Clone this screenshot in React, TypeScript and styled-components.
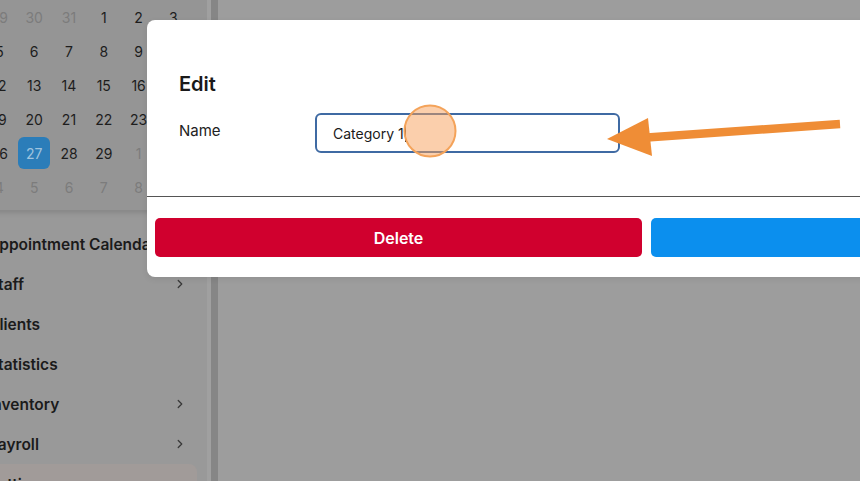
import React from "react";
import styled, { createGlobalStyle } from "styled-components";
import { ChevronRight } from "lucide-react";

const Global = createGlobalStyle`
  html, body { margin: 0; padding: 0; overflow: hidden; }
  body { font-family: Inter, "Noto Sans", sans-serif; }
  * { box-sizing: border-box; }
`;

const Page = styled.div`
  position: relative;
  width: 860px;
  height: 481px;
  overflow: hidden;
  display: flex;
  background: #9c9c9c;
`;

const Sidebar = styled.aside`
  flex: 0 0 247px;
  margin-left: -40px;
  background: #999999;
  display: flex;
  flex-direction: column;
  overflow: hidden;
  & > * { flex-shrink: 0; }
`;

const CalendarPanel = styled.div`
  background: #959595;
  padding: 0 0 6px 22px;
  box-shadow: 0 3px 5px rgba(0, 0, 0, 0.12);
`;

const CalendarViewport = styled.div`
  width: 215px;
  overflow: hidden;
`;

const CalendarGrid = styled.div`
  display: grid;
  grid-template-columns: repeat(7, 34.8px);
  grid-auto-rows: 34px;
  width: 243.6px;
`;

const Day = styled.div<{ $muted?: boolean; $selected?: boolean }>`
  display: flex;
  align-items: center;
  justify-content: center;
  font-size: 14px;
  color: ${(p) => (p.$muted ? "#7c7c7c" : "#1d1d1d")};
  & > span {
    width: 32px;
    height: 32px;
    display: flex;
    align-items: center;
    justify-content: center;
    border-radius: 6px;
    background: ${(p) => (p.$selected ? "#2b7db9" : "transparent")};
    color: ${(p) => (p.$selected ? "#9fc4df" : "inherit")};
  }
`;

const Menu = styled.nav`
  display: flex;
  flex-direction: column;
  padding: 14px 10px 0 0;
  & > * { flex-shrink: 0; }
`;

const MenuItem = styled.div<{ $active?: boolean }>`
  height: 40px;
  display: flex;
  align-items: center;
  justify-content: space-between;
  padding: 0 10px 0 28px;
  font-size: 15.5px;
  font-weight: 600;
  color: #1b1b1b;
  white-space: nowrap;
  border-radius: 8px;
  background: ${(p) => (p.$active ? "#a19b99" : "transparent")};
  svg { color: #3a3a3a; flex-shrink: 0; }
`;

const ScrollTrack = styled.div`
  flex: 0 0 11px;
  display: flex;
  background: #a0a0a0;
  padding-left: 4px;
`;

const ScrollThumb = styled.div`
  flex: 1;
  background: #868686;
`;

const Main = styled.main`
  flex: 1;
  background: #9d9d9d;
`;

const Modal = styled.div`
  position: absolute;
  left: 147px;
  top: 20px;
  width: 999px;
  height: 257px;
  background: #ffffff;
  border-radius: 8px;
  display: flex;
  flex-direction: column;
  box-shadow: 0 2px 6px rgba(0, 0, 0, 0.08);
`;

const ModalBody = styled.div`
  padding: 50px 32px 0 32px;
  height: 177px;
  border-bottom: 1px solid #555555;
`;

const Title = styled.h2`
  margin: 0;
  font-size: 20px;
  line-height: 28px;
  font-weight: 600;
  color: #1a1a1a;
`;

const FieldRow = styled.div`
  margin-top: 15px;
  display: flex;
  align-items: flex-start;
`;

const Label = styled.label`
  flex: 0 0 136px;
  padding-top: 8px;
  font-size: 15px;
  line-height: 20px;
  color: #222222;
`;

const InputBox = styled.div`
  width: 305px;
  height: 40px;
  border: 2px solid #3f6aa3;
  border-radius: 6px;
  padding: 0 14px 0 16px;
  display: flex;
  align-items: center;
  font-size: 14px;
  color: #1a1a1a;
`;

const Caret = styled.span`
  display: inline-block;
  width: 1px;
  height: 17px;
  background: #1a1a1a;
  margin-left: 1px;
`;

const Footer = styled.div`
  padding: 21px 8px 20px 8px;
  display: grid;
  grid-template-columns: 487px 1fr;
  gap: 9px;
`;

const Button = styled.button<{ $variant: "danger" | "primary" }>`
  height: 39px;
  border: none;
  border-radius: 5px;
  font-family: Inter, "Noto Sans", sans-serif;
  font-size: 16px;
  font-weight: 600;
  color: #ffffff;
  background: ${(p) => (p.$variant === "danger" ? "#d0002e" : "#0b8fee")};
`;

const Annotation = styled.svg`
  position: absolute;
  left: 0;
  top: 0;
  width: 860px;
  height: 481px;
  pointer-events: none;
`;

type D = { n: number; m?: boolean; s?: boolean };
const weeks: D[][] = [
  [{ n: 29, m: true }, { n: 30, m: true }, { n: 31, m: true }, { n: 1 }, { n: 2 }, { n: 3 }, { n: 4 }],
  [{ n: 5 }, { n: 6 }, { n: 7 }, { n: 8 }, { n: 9 }, { n: 10 }, { n: 11 }],
  [{ n: 12 }, { n: 13 }, { n: 14 }, { n: 15 }, { n: 16 }, { n: 17 }, { n: 18 }],
  [{ n: 19 }, { n: 20 }, { n: 21 }, { n: 22 }, { n: 23 }, { n: 24 }, { n: 25 }],
  [{ n: 26 }, { n: 27, s: true }, { n: 28 }, { n: 29 }, { n: 1, m: true }, { n: 2, m: true }, { n: 3, m: true }],
  [{ n: 4, m: true }, { n: 5, m: true }, { n: 6, m: true }, { n: 7, m: true }, { n: 8, m: true }, { n: 9, m: true }, { n: 10, m: true }],
];

const menu = [
  { label: "Appointment Calendar", chevron: false },
  { label: "Staff", chevron: true },
  { label: "Clients", chevron: false },
  { label: "Statistics", chevron: false },
  { label: "Inventory", chevron: true },
  { label: "Payroll", chevron: true },
  { label: "Settings", chevron: false, active: true },
];

export default function App() {
  return (
    <Page>
      <Global />
      <Sidebar>
        <CalendarPanel>
          <CalendarViewport>
            <CalendarGrid>
              {weeks.flat().map((d, i) => (
                <Day key={i} $muted={d.m} $selected={d.s}>
                  <span>{d.n}</span>
                </Day>
              ))}
            </CalendarGrid>
          </CalendarViewport>
        </CalendarPanel>
        <Menu>
          {menu.map((m) => (
            <MenuItem key={m.label} $active={m.active}>
              <span>{m.label}</span>
              {m.chevron && <ChevronRight size={14} strokeWidth={2.2} />}
            </MenuItem>
          ))}
        </Menu>
      </Sidebar>
      <ScrollTrack>
        <ScrollThumb />
      </ScrollTrack>
      <Main />

      <Modal>
        <ModalBody>
          <Title>Edit</Title>
          <FieldRow>
            <Label>Name</Label>
            <InputBox>
              Category 1<Caret />
            </InputBox>
          </FieldRow>
        </ModalBody>
        <Footer>
          <Button $variant="danger">Delete</Button>
          <Button $variant="primary">Save</Button>
        </Footer>
      </Modal>

      <Annotation viewBox="0 0 860 481">
        <circle cx="430" cy="131" r="25.5" fill="rgba(248,160,90,0.5)" stroke="#f4a35a" strokeWidth="2" />
        <line x1="840" y1="124" x2="640" y2="138" stroke="#ef8d36" strokeWidth="8.5" />
        <polygon points="607,139 648,118 652,156" fill="#ef8d36" />
      </Annotation>
    </Page>
  );
}
